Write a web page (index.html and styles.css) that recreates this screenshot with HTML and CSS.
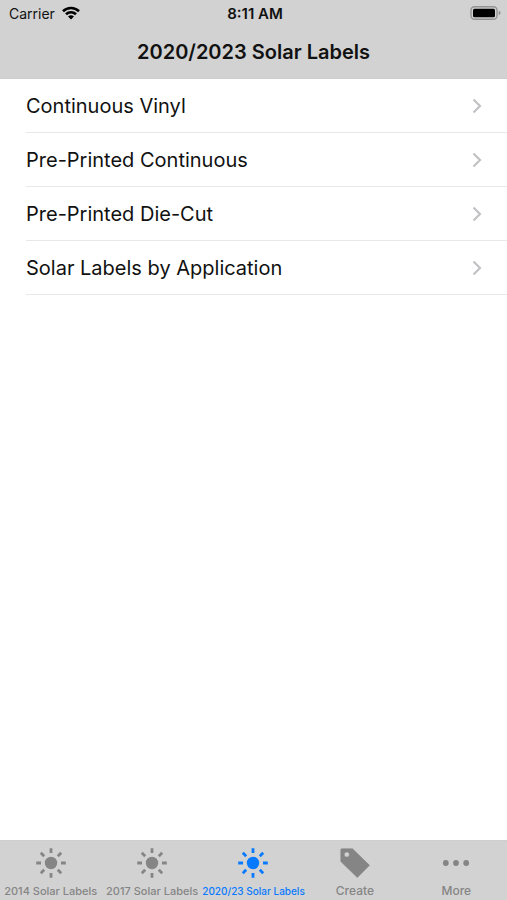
FILE: index.html
```html
<!DOCTYPE html>
<html lang="en">
<head>
  <meta charset="UTF-8">
  <meta name="viewport" content="width=device-width, initial-scale=1">
  <title>2020/2023 Solar Labels</title>
  <link rel="stylesheet" href="styles.css">
</head>
<body>

  <!-- Shared icons -->
  <svg class="icon-defs" aria-hidden="true">
    <symbol id="sun" viewBox="0 0 30 30">
      <circle cx="15" cy="15" r="6.200" fill="currentColor"/>
      <path d="M15 .2v4.800M15 25v4.800M.2 15H5M25 15h4.800M4.800 4.800l3.400 3.400M21.800 21.800l3.400 3.400M4.800 25.200l3.400-3.400M21.800 8.200l3.400-3.400" stroke="currentColor" stroke-width="2.800"/>
    </symbol>
    <symbol id="chevron" viewBox="0 0 10 16">
      <path d="M1.500 1.500L8 8l-6.500 6.500" fill="none" stroke="currentColor" stroke-width="2.200"/>
    </symbol>
  </svg>

  <!-- Status bar and title -->
  <header class="header">
    <div class="status-bar">
      <div class="carrier">
        <span>Carrier</span>
        <svg class="wifi" viewBox="0 0 18 14" aria-hidden="true">
          <path d="M1 5.200a11.500 11.500 0 0 1 16 0M4 8.300a7.200 7.200 0 0 1 10 0" fill="none" stroke="currentColor" stroke-width="2.600"/>
          <path d="M9 13.600L6 10.600a4.300 4.300 0 0 1 6 0z" fill="currentColor"/>
        </svg>
      </div>
      <time class="clock">8:11 AM</time>
      <svg class="battery" viewBox="0 0 31 14" aria-hidden="true">
        <rect x="1" y=".8" width="26" height="12.400" rx="3.500" fill="none" stroke="#929292" stroke-width="1.400"/>
        <rect x="3" y="2.800" width="22" height="8.400" rx="1.500" fill="#000"/>
        <path d="M28.600 4.800q2 .6 2 2.200t-2 2.200z" fill="#929292"/>
      </svg>
    </div>
    <h1 class="title">2020/2023 Solar Labels</h1>
  </header>

  <!-- Label categories -->
  <main class="content">
    <ul class="list">
      <li><a class="row" href="#vinyl">Continuous Vinyl <svg class="chevron" aria-hidden="true"><use href="#chevron"/></svg></a></li>
      <li><a class="row" href="#continuous">Pre-Printed Continuous <svg class="chevron" aria-hidden="true"><use href="#chevron"/></svg></a></li>
      <li><a class="row" href="#die-cut">Pre-Printed Die-Cut <svg class="chevron" aria-hidden="true"><use href="#chevron"/></svg></a></li>
      <li><a class="row" href="#application">Solar Labels by Application <svg class="chevron" aria-hidden="true"><use href="#chevron"/></svg></a></li>
    </ul>
  </main>

  <!-- Tab bar -->
  <nav class="tab-bar">
    <a class="tab medium" href="#2014">
      <svg class="tab-icon" aria-hidden="true"><use href="#sun"/></svg>
      <span>2014 Solar Labels</span>
    </a>
    <a class="tab medium" href="#2017">
      <svg class="tab-icon" aria-hidden="true"><use href="#sun"/></svg>
      <span>2017 Solar Labels</span>
    </a>
    <a class="tab long active" href="#2020" aria-current="page">
      <svg class="tab-icon" aria-hidden="true"><use href="#sun"/></svg>
      <span>2020/23 Solar Labels</span>
    </a>
    <a class="tab" href="#create">
      <svg class="tab-icon" viewBox="0 0 30 30" aria-hidden="true">
        <path d="M1.500 .8H12.500L29.500 17.300 17.300 29.500.8 13.500V1.500z M6.800 3.900a2.600 2.600 0 1 0 0 5.200a2.600 2.600 0 1 0 0-5.200z" fill="currentColor" fill-rule="evenodd" stroke="currentColor" stroke-width=".6" stroke-linejoin="round"/>
      </svg>
      <span>Create</span>
    </a>
    <a class="tab" href="#more">
      <svg class="tab-icon" viewBox="0 0 30 30" aria-hidden="true">
        <g fill="currentColor">
          <circle cx="4.800" cy="15" r="2.900"/>
          <circle cx="15" cy="15" r="2.900"/>
          <circle cx="25.200" cy="15" r="2.900"/>
        </g>
      </svg>
      <span>More</span>
    </a>
  </nav>

</body>
</html>
```
FILE: styles.css
```css
/* General page styling */
body {
  display: flex;
  flex-direction: column;
  min-height: 100vh;
  margin: 0;
  background-color: white;
  color: #111;
  font-family: Inter, "Liberation Sans", sans-serif;
}

a {
  color: inherit;
  text-decoration: none;
}

.icon-defs {
  display: none;
}

/* Header */
.header {
  background-color: #d2d2d2;
  border-bottom: 1px solid #cecece;
}

.status-bar {
  display: grid;
  grid-template-columns: 1fr auto 1fr;
  align-items: center;
  height: 26px;
  padding: 0 6px 0 9px;
  font-size: 14px;
}

.carrier {
  display: flex;
  align-items: center;
  gap: 7px;
}

.wifi {
  width: 18px;
  height: 14px;
  color: black;
}

.clock {
  font-size: 15px;
  font-weight: 600;
}

.battery {
  justify-self: end;
  width: 31px;
  height: 14px;
}

.title {
  margin: 0;
  font-size: 20px;
  font-weight: 600;
  line-height: 52px;
  text-align: center;
}

/* List of categories */
.content {
  flex: 1;
}

.list {
  margin: 0;
  padding: 0 0 0 26px;
  list-style: none;
}

.row {
  display: flex;
  align-items: center;
  justify-content: space-between;
  height: 53px;
  padding-right: 25px;
  border-bottom: 1px solid #e8e8e8;
  font-size: 20px;
}

.chevron {
  width: 10px;
  height: 16px;
  color: #c2c2c4;
}

/* Bottom tab bar */
.tab-bar {
  display: grid;
  grid-template-columns: repeat(5, minmax(0, 1fr));
  height: 59px;
  border-top: 1px solid #cecece;
  background-color: #d2d2d2;
}

.tab {
  display: flex;
  flex-direction: column;
  align-items: center;
  gap: 5px;
  padding-top: 7px;
  color: #858585;
  font-size: 12px;
  font-weight: 500;
  line-height: 16px;
  white-space: nowrap;
}

/* Longer labels get smaller text to stay inside their tab */
.tab.medium {
  font-size: 11px;
}

.tab.long {
  font-size: 10px;
}

.tab-icon {
  width: 30px;
  height: 30px;
}

.tab.active {
  color: #087aff;
}
```
